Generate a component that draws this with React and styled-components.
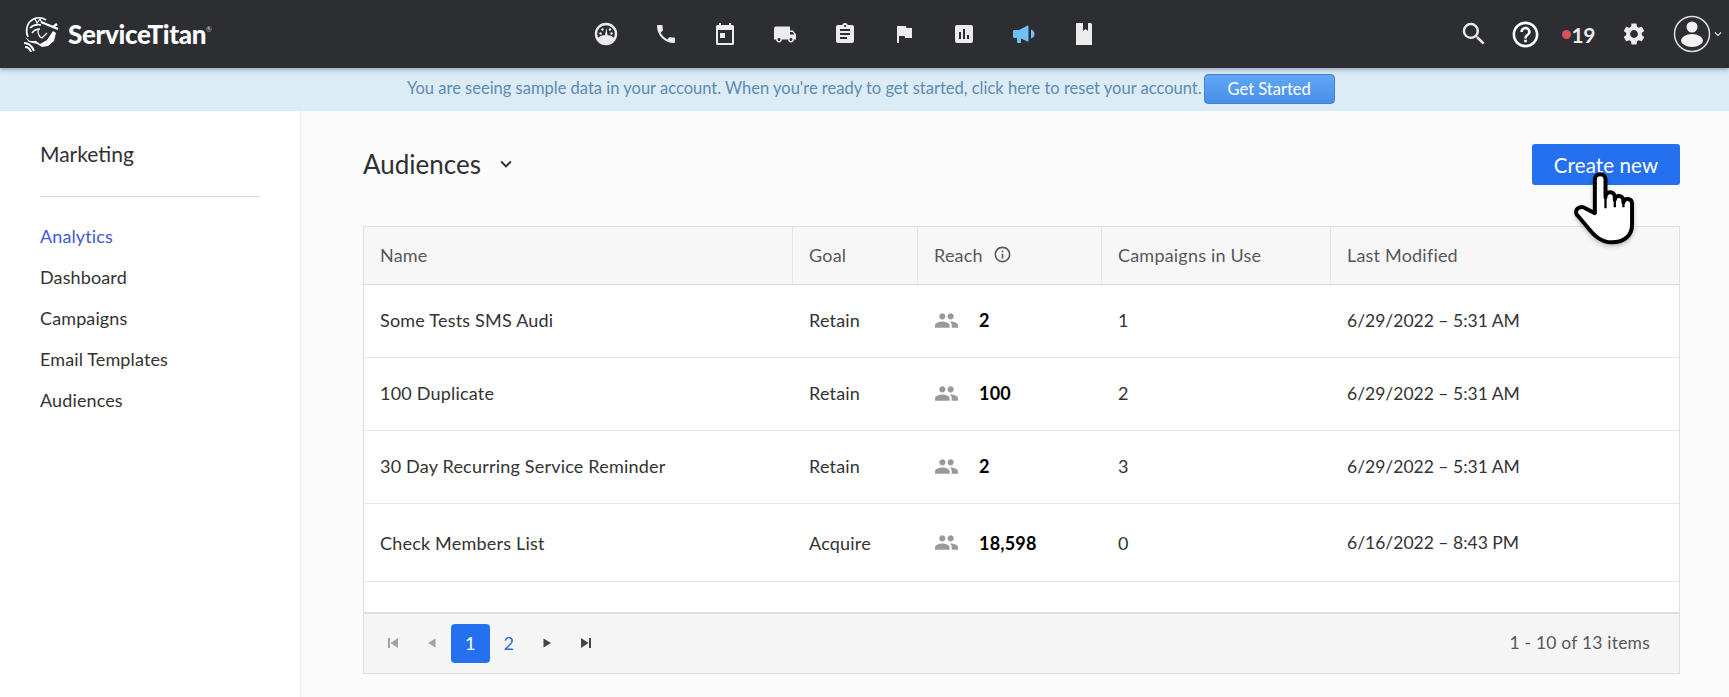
import React from 'react'
import styled, {createGlobalStyle} from 'styled-components'
import {
    MdPhone, MdLocalShipping, MdAssignment, MdFlag, MdAssessment,
    MdSearch, MdHelpOutline, MdSettings, MdPeople, MdInfoOutline, MdExpandMore
} from 'react-icons/md'

const FONT = `Lato, "Noto Sans", sans-serif`

const Global = createGlobalStyle`
  html, body { margin: 0; padding: 0; height: 100%; background: #fbfbfb; overflow: hidden; }
  * { box-sizing: border-box; }
  body { font-family: ${FONT}; color: #333; }
`
const Page = styled.div`
  height: 697px;
  display: flex;
  flex-direction: column;
`
const Header = styled.header`
  height: 68px;
  flex: none;
  background: #2d2e32;
  display: flex;
  align-items: center;
  padding-left: 23px;
  position: relative;
  z-index: 2;
  box-shadow: 0 2px 4px rgba(30, 50, 70, .35);
`
const Brand = styled.div`
  width: 571px;
  flex: none;
  display: flex;
  align-items: center;
  gap: 7px;
  color: #fff;
`
const BrandName = styled.span`
  font-family: Lato, sans-serif;
  font-weight: 900;
  font-size: 26px;
  letter-spacing: -.35px;
  sup { font-size: 7px; font-weight: 400; vertical-align: 12px; letter-spacing: 0; color: #ccc; }
`
const Nav = styled.nav`
  display: flex;
  align-items: center;
  gap: 35.7px;
`
const NavIcon = styled.span`
  width: 24px;
  height: 24px;
  display: flex;
  align-items: center;
  justify-content: center;
  color: ${p => p.$active ? '#6fc0f8' : '#ececec'};
  svg { display: block; }
`
const Tools = styled.div`
  margin-left: auto;
  display: flex;
  align-items: center;
  padding-right: 4px;
  color: #ececec;
`
const Tool = styled.span`
  display: flex;
  align-items: center;
  margin-right: ${p => p.$mr}px;
  color: ${p => p.$white ? '#fff' : '#ececec'};
`
const Dot = styled.i`
  width: 9px;
  height: 9px;
  border-radius: 50%;
  background: #d9505a;
`
const Count = styled.b`
  font-size: 21px;
  font-weight: 700;
  letter-spacing: -.4px;
`
const Banner = styled.div`
  height: 43px;
  flex: none;
  background: #dbecf7;
  display: flex;
  align-items: center;
  padding: 0 0 2px 407px;
  font-size: 16.5px;
  color: #5e8bb1;
`
const BannerText = styled.span`
  padding-bottom: 2px;
`
const BannerButton = styled.button`
  width: 131px;
  height: 30px;
  margin-left: 2px;
  font: inherit;
  font-size: 16.5px;
  color: #fff;
  border: 1px solid #3f82d6;
  border-radius: 4px;
  background: linear-gradient(#5fa8f7, #4a8ee6);
`
const Body = styled.div`
  flex: 1;
  display: flex;
  min-height: 0;
`
const Sidebar = styled.aside`
  width: 301px;
  flex: none;
  padding: 31px 40px 0;
  border-right: 1px solid #ececec;
  background: #fff;
`
const SideTitle = styled.h2`
  margin: 0;
  height: 55px;
  padding-bottom: 12px;
  font-size: 21px;
  font-weight: 400;
  line-height: 24px;
  color: #2f3033;
  border-bottom: 1px solid #d9d9d9;
  width: 220px;
`
const SideList = styled.ul`
  list-style: none;
  margin: 19px 0 0;
  padding: 0;
  display: flex;
  flex-direction: column;
`
const SideItem = styled.li`
  height: 41px;
  line-height: 41px;
  font-size: 18px;
  letter-spacing: .12px;
  color: ${p => p.$active ? '#4457d6' : '#333'};
`
const Main = styled.main`
  flex: 1;
  padding: 33px 49px 0 62px;
  min-width: 0;
`
const TitleRow = styled.div`
  height: 82px;
  display: flex;
  align-items: flex-start;
  justify-content: space-between;
`
const Title = styled.h1`
  margin: 0;
  height: 39px;
  display: flex;
  align-items: center;
  gap: 14px;
  font-size: 26px;
  font-weight: 400;
  color: #2f3033;
`
const CreateWrap = styled.div`
  position: relative;
`
const CreateButton = styled.button`
  width: 148px;
  height: 41px;
  background: #2470ef;
  color: #fff;
  border: 0;
  border-radius: 3px;
  font: inherit;
  font-size: 20.5px;
  letter-spacing: .12px;
`
const Hand = styled.svg`
  position: absolute;
  left: 38px;
  top: 26px;
  filter: drop-shadow(0 2px 2px rgba(0, 0, 0, .25));
`
const Table = styled.div`
  border: 1px solid #e0e0e0;
  background: #fff;
  height: 448px;
  display: flex;
  flex-direction: column;
`
const Row = styled.div`
  display: grid;
  grid-template-columns: 429px 125px 184px 229px 1fr;
  align-items: center;
  height: ${p => p.$h}px;
  padding-bottom: ${p => p.$pb || 0}px;
  flex: none;
  border-bottom: 1px solid ${p => p.$head ? '#dcdcdc' : '#e6e6e6'};
  background: ${p => p.$head ? '#f7f7f7' : '#fff'};
  font-size: 18px;
  letter-spacing: .2px;
  color: ${p => p.$head ? '#56585c' : '#333'};
`
const Cell = styled.div`
  height: 100%;
  display: flex;
  align-items: center;
  padding: 0 0 ${p => p.$head ? 2 : 0}px 16px;
  border-right: ${p => p.$head ? '1px solid #e6e6e6' : '0'};
  &:last-child { border-right: 0; }
`
const DateCell = styled(Cell)`
  font-size: 17.5px;
  letter-spacing: 0;
`
const Reach = styled(Cell)`
  gap: 20px;
  color: #000;
  font-weight: 700;
  svg { color: #999; flex: none; }
`
const ReachHead = styled(Cell)`
  gap: 10px;
  svg { color: #56585c; }
`
const Filler = styled.div`
  flex: 1;
`
const Footer = styled.div`
  height: 61px;
  flex: none;
  background: #f5f5f5;
  border-top: 2px solid #dfdfdf;
  display: flex;
  align-items: center;
  justify-content: space-between;
  padding: 0 29px 0 10px;
  font-size: 17.5px;
  letter-spacing: .2px;
  color: #55575b;
`
const Pager = styled.div`
  display: flex;
  align-items: center;
`
const PageCell = styled.span`
  width: 38.5px;
  height: 39px;
  border-radius: 4px;
  display: flex;
  align-items: center;
  justify-content: center;
  font-size: 18px;
  padding-bottom: 1px;
  color: ${p => p.$current ? '#fff' : p.$link ? '#2f6fe0' : p.$off ? '#a3a3a3' : '#444'};
  background: ${p => p.$current ? '#2470ef' : 'transparent'};
`
const ItemCount = styled.span`
  padding-bottom: 3px;
`

const Logo = () => (
    <svg width="38" height="36" viewBox="0 0 38 36" fill="none" stroke="#fff" strokeWidth="1.6">
        <path d="M5 21C2 15 4 7 9 4c4-3 10-3 14 0M7 12c3-3 7-4 11-3M9 17c2-3 5-4 8-4"/>
        <path d="M12 3l2 4 3-4 2 4" strokeWidth="1.2"/>
        <path d="M18 6l12 5M30 11l4-3M30 11l5 2" strokeWidth="2.4"/>
        <path d="M15 14c0 4 1 7 4 8l5-5" strokeWidth="1.3"/>
        <path d="M2 21l5 4h6l4 3 7-4 6-9 3 2-2 8-6 5-6 1-5-3-8-2z" fill="#fff" stroke="none"/>
        <path d="M1 27c4 0 8 3 10 8M2 31c3 0 5 2 6 5" strokeWidth="2"/>
    </svg>
)

const Gauge = () => (
    <svg width="24" height="24" viewBox="0 0 24 24">
        <circle cx="12" cy="12" r="10" fill="none" stroke="currentColor" strokeWidth="2.4"/>
        <path d="M3 16.500c2.500-2.500 5.500-3.500 9-3.500s6.500 1 9 3.500c-1.800 3-5 5.500-9 5.500s-7.200-2.500-9-5.500z" fill="currentColor"/>
        <path d="M11 13l1.500-7L13.500 13z" fill="currentColor"/>
        <circle cx="6.500" cy="11.500" r="1.200" fill="currentColor"/>
        <circle cx="8.500" cy="7.500" r="1.200" fill="currentColor"/>
        <circle cx="16" cy="7.500" r="1.200" fill="currentColor"/>
        <circle cx="17.500" cy="11.500" r="1.200" fill="currentColor"/>
    </svg>
)

const Calendar = () => (
    <svg width="24" height="24" viewBox="0 0 24 24">
        <path fillRule="evenodd" fill="currentColor"
              d="M6 1h2v2h8V1h2v2h1.500A1.500 1.500 0 0 1 21 4.500v17a1.500 1.500 0 0 1-1.500 1.500h-15A1.500 1.500 0 0 1 3 21.500v-17A1.500 1.500 0 0 1 4.500 3H6zM5 8v13h14V8zm2 3h5v5H7z"/>
    </svg>
)

const Megaphone = () => (
    <svg width="24" height="24" viewBox="0 0 24 24" fill="currentColor">
        <path d="M1 9.500c0-.8.7-1.500 1.500-1.500H7l8.500-4.500c.5-.2 1 .1 1 .6v14.800c0 .5-.5.8-1 .6L9 16.500V20c0 .6-.4 1-1 1H6c-.6 0-1-.4-1-1v-4H2.500C1.700 16 1 15.300 1 14.500z"/>
        <path d="M19 7.500c2.500 1 3.500 2.500 3.500 4.500s-1 3.500-3.500 4.500z"/>
    </svg>
)

const Book = () => (
    <svg width="24" height="24" viewBox="0 0 24 24">
        <path fill="currentColor" d="M4.500 1H11v8l2.500-2L16 9V1h2.500A1.500 1.500 0 0 1 20 2.500v20a.5.5 0 0 1-.5.500h-15a.5.5 0 0 1-.5-.5V1.500z"/>
    </svg>
)

const Avatar = () => (
    <svg width="38" height="38" viewBox="0 0 38 38">
        <circle cx="19" cy="19" r="17.500" fill="none" stroke="#dcdcdc" strokeWidth="1.500"/>
        <circle cx="19" cy="12" r="5.500" fill="#f2f2f2"/>
        <ellipse cx="19" cy="25.500" rx="11" ry="6.500" fill="#f2f2f2"/>
    </svg>
)

const Skip = ({dir}) => (
    <svg width="12" height="12" viewBox="0 0 12 12" fill="currentColor">
        {dir === 'first'
            ? <path d="M1 1h2v10H1zM11 1v10L3.500 6z"/>
            : <path d="M9 1h2v10H9zM1 1v10l7.500-5z"/>}
    </svg>
)

const Arrow = ({dir}) => (
    <svg width="12" height="12" viewBox="0 0 12 12" fill="currentColor">
        {dir === 'prev' ? <path d="M9.500 1.500v9L2 6z"/> : <path d="M2.500 1.500v9L10 6z"/>}
    </svg>
)

const navIcons = [
    <Gauge/>, <MdPhone size={26}/>, <Calendar/>, <MdLocalShipping size={29}/>, <MdAssignment size={26}/>,
    <MdFlag size={26}/>, <MdAssessment size={26}/>, <Megaphone/>, <Book/>
]

const rows = [
    {name: 'Some Tests SMS Audi', goal: 'Retain', reach: '2', used: '1', date: '6/29/2022 – 5:31 AM', h: 73, pb: 2},
    {name: '100 Duplicate', goal: 'Retain', reach: '100', used: '2', date: '6/29/2022 – 5:31 AM', h: 73, pb: 2},
    {name: '30 Day Recurring Service Reminder', goal: 'Retain', reach: '2', used: '3', date: '6/29/2022 – 5:31 AM', h: 73, pb: 2},
    {name: 'Check Members List', goal: 'Acquire', reach: '18,598', used: '0', date: '6/16/2022 – 8:43 PM', h: 78, pb: 0}
]

const sideItems = ['Analytics', 'Dashboard', 'Campaigns', 'Email Templates', 'Audiences']

export default function App() {
    return (
        <Page>
            <Global/>
            <Header>
                <Brand>
                    <Logo/>
                    <BrandName>ServiceTitan<sup>®</sup></BrandName>
                </Brand>
                <Nav>
                    {navIcons.map((icon, i) => (
                        <NavIcon key={i} $active={i === 7}>{icon}</NavIcon>
                    ))}
                </Nav>
                <Tools>
                    <Tool $mr={21}><MdSearch size={30}/></Tool>
                    <Tool $mr={21} $white><MdHelpOutline size={31}/></Tool>
                    <Tool $mr={26}><Dot/><Count>19</Count></Tool>
                    <Tool $mr={26}><MdSettings size={26}/></Tool>
                    <Tool><Avatar/><MdExpandMore size={14}/></Tool>
                </Tools>
            </Header>
            <Banner>
                <BannerText>You are seeing sample data in your account. When you're ready to get started, click here to reset your account.</BannerText>
                <BannerButton>Get Started</BannerButton>
            </Banner>
            <Body>
                <Sidebar>
                    <SideTitle>Marketing</SideTitle>
                    <SideList>
                        {sideItems.map((item, i) => (
                            <SideItem key={item} $active={i === 0}>{item}</SideItem>
                        ))}
                    </SideList>
                </Sidebar>
                <Main>
                    <TitleRow>
                        <Title>Audiences <MdExpandMore size={22}/></Title>
                        <CreateWrap>
                            <CreateButton>Create new</CreateButton>
                            <Hand width="67" height="78" viewBox="0 0 200 235">
                                <path fill="#fff" stroke="#000" strokeWidth="12" strokeLinejoin="round"
                                      d="M74 130L74 28C74 8 106 8 106 28L106 82C106 62 134 62 134 82L134 90C136 72 160 76 160 92L160 98C162 82 186 84 186 102L186 165C186 195 165 218 125 218C90 218 70 195 50 170L20 135C10 120 30 105 45 115Z"/>
                                <path fill="none" stroke="#000" strokeWidth="7" d="M106 82V115M134 90V112M160 98V112"/>
                            </Hand>
                        </CreateWrap>
                    </TitleRow>
                    <Table>
                        <Row $head $h={58}>
                            <Cell $head>Name</Cell>
                            <Cell $head>Goal</Cell>
                            <ReachHead $head>Reach <MdInfoOutline size={19}/></ReachHead>
                            <Cell $head>Campaigns in Use</Cell>
                            <Cell $head>Last Modified</Cell>
                        </Row>
                        {rows.map(r => (
                            <Row key={r.name} $h={r.h} $pb={r.pb}>
                                <Cell>{r.name}</Cell>
                                <Cell>{r.goal}</Cell>
                                <Reach><MdPeople size={25}/>{r.reach}</Reach>
                                <Cell>{r.used}</Cell>
                                <DateCell>{r.date}</DateCell>
                            </Row>
                        ))}
                        <Filler/>
                        <Footer>
                            <Pager>
                                <PageCell $off><Skip dir="first"/></PageCell>
                                <PageCell $off><Arrow dir="prev"/></PageCell>
                                <PageCell $current>1</PageCell>
                                <PageCell $link>2</PageCell>
                                <PageCell><Arrow dir="next"/></PageCell>
                                <PageCell><Skip dir="last"/></PageCell>
                            </Pager>
                            <ItemCount>1 - 10 of 13 items</ItemCount>
                        </Footer>
                    </Table>
                </Main>
            </Body>
        </Page>
    )
}
